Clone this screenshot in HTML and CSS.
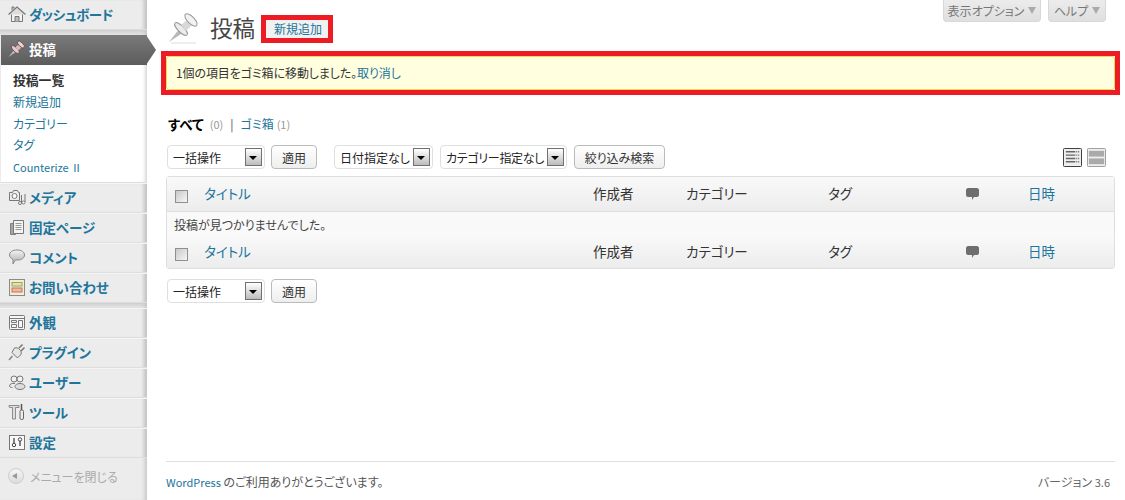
FILE: index.html
```html
<!DOCTYPE html>
<html lang="ja">
<head>
<meta charset="utf-8">
<title>投稿</title>
<link rel="stylesheet" href="styles.css">
</head>
<body>
<div class="wrap">
  <nav class="sidebar">
    <a class="item first"><svg class="ico" viewBox="0 0 18 18"><path d="M3.500 8v8.500h11V8" fill="#f4f4f4" stroke="#777"/><path d="M.5 9.500 9 2l8.500 7.500" fill="#ddd" stroke="#777" stroke-width="1.200"/><path d="M7 16.500v-5h4v5" fill="#bbb" stroke="#777"/><path d="M4 5V2h2v1.500" fill="#ccc" stroke="#777"/></svg><span>ダッシュボード</span></a>
    <div class="band"></div>
    <a class="item active"><svg class="ico" viewBox="0 0 32 32"><path d="M1 30 12 16 16 20Z" fill="#c9b7b7"/><ellipse cx="13" cy="17" rx="9" ry="3.500" transform="rotate(45 13 17)" fill="#e6c9c9" stroke="#5c4c4c" stroke-width="1.500"/><path d="M13 13 18 19 25 12 20 7Z" fill="#dbb7b7"/><ellipse cx="23" cy="8" rx="8" ry="3.500" transform="rotate(45 23 8)" fill="#edd4d4" stroke="#5c4c4c" stroke-width="1.500"/></svg><span>投稿</span></a>
    <div class="sub">
      <a class="sub-link current">投稿一覧</a>
      <a class="sub-link">新規追加</a>
      <a class="sub-link">カテゴリー</a>
      <a class="sub-link">タグ</a>
      <a class="sub-link"><span class="latin">Counterize Ⅱ</span></a>
    </div>
    <a class="item"><svg class="ico" viewBox="0 0 18 18"><path d="M1.500 4.500h3l1-2h4l1 2h1v8h-10z" fill="#eee" stroke="#777"/><circle cx="6.500" cy="8" r="2.500" fill="#fff" stroke="#777"/><path d="M13.500 7v8M17 6v8" stroke="#777"/><circle cx="12" cy="15" r="1.500" fill="#fff" stroke="#777"/><circle cx="15.500" cy="14.500" r="1.500" fill="#fff" stroke="#777"/></svg><span>メディア</span></a>
    <a class="item"><svg class="ico" viewBox="0 0 18 18"><path d="M2.500 5.500h5v11h-5z" fill="#a5a5a5" stroke="#808080"/><path d="M5.500 2.500h10v13h-10z" fill="#f4f4f4" stroke="#777"/><path d="M7.500 5.500h6M7.500 7.500h6M7.500 9.500h6M7.500 11.500h6" stroke="#999"/></svg><span>固定ページ</span></a>
    <a class="item"><svg class="ico" viewBox="0 0 18 18"><defs><linearGradient id="bub" x1="0" y1="0" x2="0" y2="1"><stop offset="0" stop-color="#f4f4f4"/><stop offset="1" stop-color="#a9a9a9"/></linearGradient></defs><path d="M9 2c4.500 0 7.500 2 7.500 5s-3 5-6.500 5c-1.500 0-2.500 0-3 .5L5 16v-4.500C3 10.500 1.500 9 1.500 7 1.500 4 4.500 2 9 2z" fill="url(#bub)" stroke="#8a8a8a"/></svg><span>コメント</span></a>
    <a class="item"><svg class="ico" viewBox="0 0 18 18"><rect x="1.500" y="1.500" width="15" height="16" fill="#f3edd2" stroke="#8a8a8a"/><rect x="4" y="4.500" width="10" height="3.500" fill="#dfe6a8" stroke="#9aa36a"/><rect x="4" y="10" width="10" height="4" fill="#eeb8a0" stroke="#c8705a"/></svg><span>お問い合わせ</span></a>
    <div class="band"></div>
    <a class="item"><svg class="ico" viewBox="0 0 18 18"><rect x="1.500" y="2.500" width="15" height="14" rx="1" fill="#f6f6f6" stroke="#777"/><path d="M2 5.500h14" stroke="#777"/><path d="M3.500 7.500h5v2h-5zM3.500 11.500h5v3h-5zM10.500 7.500h4v7h-4z" fill="none" stroke="#777"/></svg><span>外観</span></a>
    <a class="item"><svg class="ico" viewBox="0 0 18 18"><path d="M1 17 4.500 13" stroke="#888" stroke-width="1.500"/><path d="M4 9.500 9.500 15l3-3c1-1 1-3 0-4.500l-2-2C9 4.500 7 4.500 6 5.500z" fill="#e6e6e6" stroke="#777"/><path d="M11 5l3.500-3.500M13 8l3.500-3.500" stroke="#777" stroke-width="1.500"/></svg><span>プラグイン</span></a>
    <a class="item"><svg class="ico" viewBox="0 0 18 18"><circle cx="6" cy="6" r="3" fill="#f1f1f1" stroke="#777"/><circle cx="12" cy="6" r="3" fill="#f1f1f1" stroke="#777"/><ellipse cx="12" cy="13.500" rx="5" ry="3" fill="#ddd" stroke="#777"/><path d="M7 10.500C4 10 1.500 11 1.500 13c0 1 1.500 1.500 3 1.500" fill="none" stroke="#777"/></svg><span>ユーザー</span></a>
    <a class="item"><svg class="ico" viewBox="0 0 18 18"><path d="M1 2.500h10v2H7.500V16h-3V4.500H2L1 4z" fill="#ddd" stroke="#777" stroke-width=".8"/><path d="M13.500 1v6" stroke="#555" stroke-width="1.500"/><rect x="12" y="7" width="3.500" height="9.500" rx="1.500" fill="#eee" stroke="#666"/></svg><span>ツール</span></a>
    <a class="item"><svg class="ico" viewBox="0 0 18 18"><rect x="1.500" y="2.500" width="15" height="14" fill="#f8f8f8" stroke="#777"/><path d="M6 5v8M12 5v8" stroke="#444" stroke-width="1.300"/><circle cx="6" cy="12" r="1.700" fill="#fff" stroke="#444"/><circle cx="12" cy="6.500" r="1.700" fill="#fff" stroke="#444"/></svg><span>設定</span></a>
    <a class="collapse"><span class="collapse-btn"></span><span>メニューを閉じる</span></a>
  </nav>

  <main class="main">
    <header class="head">
      <svg class="title-ico" viewBox="0 0 32 32"><path d="M3 31H28" stroke="#ddd"/><path d="M1 30 12 16 16 20Z" fill="#b8b8b8"/><ellipse cx="13" cy="17" rx="8.500" ry="3" transform="rotate(45 13 17)" fill="#ececec" stroke="#999"/><path d="M13 13 18 19 25 12 20 7Z" fill="#d8d8d8"/><ellipse cx="23" cy="8" rx="8" ry="3.500" transform="rotate(45 23 8)" fill="#f2f2f2" stroke="#999"/></svg>
      <h1 class="title">投稿</h1>
      <div class="mark mark-add"><a class="add-new">新規追加</a></div>
      <div class="screen-links">
        <a class="screen-btn wide">表示オプション<i class="tri"></i></a>
        <a class="screen-btn">ヘルプ<i class="tri"></i></a>
      </div>
    </header>

    <div class="mark mark-notice">
      <p class="notice">1個の項目をゴミ箱に移動しました。<a class="link">取り消し</a></p>
    </div>

    <ul class="filters">
      <li class="all">すべて</li><li class="count">(0)</li><li class="sep">|</li><li class="link">ゴミ箱</li><li class="count">(1)</li>
    </ul>

    <div class="toolbar">
      <div class="select s-bulk"><span>一括操作</span><i class="arrow"></i></div>
      <button class="btn">適用</button>
      <div class="select s-date"><span>日付指定なし</span><i class="arrow"></i></div>
      <div class="select s-cat"><span>カテゴリー指定なし</span><i class="arrow"></i></div>
      <button class="btn btn-filter">絞り込み検索</button>
      <div class="views">
        <svg class="view" viewBox="0 0 20 20"><rect x=".5" y=".5" width="19" height="19" rx="1" fill="#eee" stroke="#333"/><path d="M3 4h10M3 7.500h10M3 11h10M3 14.500h10" stroke="#666" stroke-width="1.500"/><path d="M14 4h3M14 7.500h3M14 11h3M14 14.500h3" stroke="#666" stroke-width="1.500" stroke-dasharray="1 1"/></svg>
        <svg class="view" viewBox="0 0 20 20"><rect x=".5" y=".5" width="19" height="19" rx="1" fill="#eee" stroke="#999"/><rect x="2" y="3" width="16" height="6" fill="#aaa"/><rect x="2" y="11" width="16" height="6" fill="#aaa"/></svg>
      </div>
    </div>

    <table class="posts">
      <colgroup>
        <col class="c-cb"><col class="c-title"><col class="c-author"><col class="c-cat"><col class="c-tag"><col class="c-com"><col class="c-date">
      </colgroup>
      <thead>
        <tr>
          <th class="cb"><i class="check"></i></th><th class="blue">タイトル</th><th>作成者</th><th>カテゴリー</th><th>タグ</th>
          <th><svg class="bubble" viewBox="0 0 13 13"><path d="M2 0h9c1 0 2 1 2 2v5c0 1-1 2-2 2H8l-2 3V9H2C1 9 0 8 0 7V2C0 1 1 0 2 0z" fill="#6e6e6e"/></svg></th>
          <th class="blue">日時</th>
        </tr>
      </thead>
      <tbody>
        <tr><td class="empty" colspan="7">投稿が見つかりませんでした。</td></tr>
      </tbody>
      <tfoot>
        <tr>
          <th class="cb"><i class="check"></i></th><th class="blue">タイトル</th><th>作成者</th><th>カテゴリー</th><th>タグ</th>
          <th><svg class="bubble" viewBox="0 0 13 13"><path d="M2 0h9c1 0 2 1 2 2v5c0 1-1 2-2 2H8l-2 3V9H2C1 9 0 8 0 7V2C0 1 1 0 2 0z" fill="#6e6e6e"/></svg></th>
          <th class="blue">日時</th>
        </tr>
      </tfoot>
    </table>

    <div class="toolbar bottom">
      <div class="select s-bulk"><span>一括操作</span><i class="arrow"></i></div>
      <button class="btn">適用</button>
    </div>

    <footer class="foot">
      <span><a class="link latin">WordPress</a> のご利用ありがとうございます。</span>
      <span class="version">バージョン <span class="latin">3.6</span></span>
    </footer>
  </main>
</div>
</body>
</html>
```

FILE: styles.css
```css
* { box-sizing: border-box; }
html, body { margin: 0; height: 500px; overflow: hidden; background: #fff; }
body {
  font-family: "Noto Sans CJK JP", "Liberation Sans", sans-serif;
  font-size: 12px;
  color: #333;
  font-feature-settings: "palt";
}
a { color: inherit; text-decoration: none; }
.latin { font-size: 11px; }

.wrap { display: flex; height: 500px; }

/* sidebar */
.sidebar {
  width: 147px;
  flex: none;
  display: flex;
  flex-direction: column;
  background: #ececec;
  box-shadow: inset -5px 0 4px -3px #c4c4c4;
}
.item {
  position: relative;
  height: 30px;
  flex: none;
  display: flex;
  align-items: center;
  gap: 3px;
  padding: 0 0 2px 8px;
  border-top: 1px solid #f5f5f5;
  border-bottom: 1px solid #dedede;
  box-shadow: inset -5px 0 4px -3px #c4c4c4;
  color: #21759b;
  font-size: 13.500px;
  font-weight: 700;
}
.item.first { border-top: 0; letter-spacing: -.4px; }
.ico { width: 18px; height: 18px; flex: none; }
.band {
  height: 5px;
  flex: none;
  background: linear-gradient(#cfcfcf, #e6e6e6);
  box-shadow: inset -5px 0 4px -3px #c4c4c4;
}
.item.active {
  margin-left: 1px;
  width: 146px;
  padding-left: 7px;
  border: 0;
  color: #fff;
  background: linear-gradient(#7a7a7a, #5c5c5c);
  box-shadow: none;
}
.item.active::after {
  content: "";
  position: absolute;
  left: 145px;
  top: 0;
  width: 10px;
  height: 30px;
  background: linear-gradient(#7a7a7a, #5c5c5c);
  clip-path: polygon(0 0, 100% 50%, 0 100%);
}
.sub {
  height: 118px;
  flex: none;
  display: flex;
  flex-direction: column;
  justify-content: center;
  background: #fff;
  padding: 4px 0 4px 12px;
  margin-left: 1px;
  border-bottom: 1px solid #dedede;
  box-shadow: inset -4px 0 4px -3px #c4c4c4;
}
.sub-link { height: 21.800px; line-height: 21.800px; color: #21759b; }
.sub-link.current { color: #333; font-weight: 700; font-size: 12.800px; }
.collapse {
  display: flex;
  align-items: center;
  gap: 6px;
  padding: 0 0 2px 8px;
  height: 38px;
  color: #aaa;
}
.collapse-btn {
  width: 16px;
  height: 16px;
  flex: none;
  border-radius: 50%;
  border: 1px solid #ccc;
  background: linear-gradient(#f6f6f6, #dcdcdc);
  position: relative;
}
.collapse-btn::after {
  content: "";
  position: absolute;
  left: 3px;
  top: 3.500px;
  border: 3.500px solid transparent;
  border-right: 5px solid #999;
  border-left: 0;
}

/* main */
.main {
  flex: 1;
  min-width: 0;
  height: 500px;
  padding: 0 10px 0 19px;
  display: flex;
  flex-direction: column;
}
.head {
  height: 51px;
  flex: none;
  display: flex;
  align-items: flex-start;
}
.title-ico { width: 32px; height: 32px; margin: 12px 10px 0 2px; flex: none; }
.title {
  margin: 10px 6px 0 0;
  width: 45px;
  font-size: 22.500px;
  line-height: 34px;
  font-weight: 400;
  color: #464646;
}
.mark { border: 5px solid #ed1c24; }
.mark-add {
  margin-top: 15px;
  height: 28px;
  width: 72px;
  flex: none;
}
.add-new {
  display: block;
  height: 18px;
  line-height: 18px;
  padding-left: 2px;
  text-align: center;
  background: #f1f1f1;
  color: #21759b;
}
.screen-links { margin-left: auto; display: flex; gap: 7px; margin-right: 9px; }
.screen-btn {
  height: 22px;
  width: 58px;
  display: flex;
  align-items: center;
  justify-content: center;
  gap: 4px;
  padding-bottom: 1px;
  border: 1px solid #d8d8d8;
  border-top: 0;
  border-radius: 0 0 4px 4px;
  background: linear-gradient(#ececec, #dfdfdf);
  color: #777;
}
.screen-btn.wide { width: 98px; }
.tri {
  width: 0;
  height: 0;
  border: 4px solid transparent;
  border-top: 7px solid #aaa;
  border-bottom: 0;
}
.mark-notice { margin: 0 -5px; height: 44px; flex: none; }
.notice {
  margin: 0;
  height: 34px;
  line-height: 32px;
  padding-left: 9px;
  background: #ffffe0;
  border: 1px solid #e6db55;
  border-radius: 3px;
  color: #333;
  letter-spacing: -.1px;
}
.link { color: #21759b; }

.filters {
  list-style: none;
  margin: 19px 0 0;
  padding: 0 0 0 2px;
  display: flex;
  height: 20px;
  line-height: 20px;
  flex: none;
}
.all { font-weight: 700; color: #000; font-size: 13.500px; margin-right: 3px; }
.count { color: #999; font-size: 11px; margin-left: 3px; }
.sep { margin: 0 7px 0 7px; color: #555; }

.toolbar {
  display: flex;
  align-items: center;
  height: 24px;
  margin-top: 11px;
  padding-left: 1px;
  flex: none;
}
.toolbar.bottom { margin-top: 10px; }
.select {
  height: 24px;
  flex: none;
  display: flex;
  align-items: center;
  justify-content: space-between;
  padding: 0 2px 0 5px;
  border: 1px solid #dfdfdf;
  border-radius: 4px;
  background: #fff;
  color: #222;
  white-space: nowrap;
}
.s-bulk { width: 98px; }
.s-date { width: 99px; margin-left: 17px; }
.s-cat { width: 127px; margin-left: 7px; letter-spacing: -.3px; }
.arrow {
  width: 17px;
  height: 18px;
  flex: none;
  position: relative;
  border: 1px solid #707070;
  background: linear-gradient(#fff, #bcbcbc);
}
.arrow::after {
  content: "";
  position: absolute;
  left: 3px;
  top: 7px;
  border: 4px solid transparent;
  border-top: 4px solid #000;
  border-bottom: 0;
}
.btn {
  height: 24px;
  width: 46px;
  margin: 0 0 0 6px;
  padding: 0;
  font: inherit;
  color: #333;
  border: 1px solid #bbb;
  border-radius: 4px;
  background: linear-gradient(#fff, #eee);
}
.btn-filter { width: 91px; margin-left: 7px; }
.views { margin-left: auto; display: flex; gap: 5px; margin-right: 9px; }
.view { width: 19px; height: 19px; }

.posts {
  width: 949px;
  margin-top: 7px;
  table-layout: fixed;
  border-collapse: separate;
  border-spacing: 0;
  border: 1px solid #dfdfdf;
  border-radius: 3px;
  flex: none;
}
.c-cb { width: 27px; }
.c-title { width: 389px; }
.c-author { width: 93px; }
.c-cat { width: 142px; }
.c-tag { width: 138px; }
.c-com { width: 62px; }
.c-date { width: 96px; }
.posts th {
  height: 35px;
  padding: 0 10px 2px;
  text-align: left;
  font-size: 13.500px;
  font-weight: 400;
  color: #333;
  background: linear-gradient(#f9f9f9, #ececec);
}
.posts thead th { border-bottom: 1px solid #dfdfdf; }
.posts tfoot th { height: 32px; }
.posts .blue { color: #21759b; }
.posts th.cb { padding: 5px 0 0 8px; }
.check {
  display: block;
  width: 13px;
  height: 13px;
  border: 1px solid #8f8f8f;
  background: linear-gradient(135deg, #c8c8c8, #f6f6f6);
}
.bubble { display: block; width: 13px; height: 13px; margin-top: 2px; }
.empty {
  height: 24px;
  padding: 0 7px;
  background: #f9f9f9;
  color: #444;
}

.foot {
  margin-top: auto;
  height: 39px;
  border-top: 1px solid #dfdfdf;
  display: flex;
  justify-content: space-between;
  align-items: center;
  color: #555;
  flex: none;
}
.version { padding-right: 5px; color: #666; }
```
